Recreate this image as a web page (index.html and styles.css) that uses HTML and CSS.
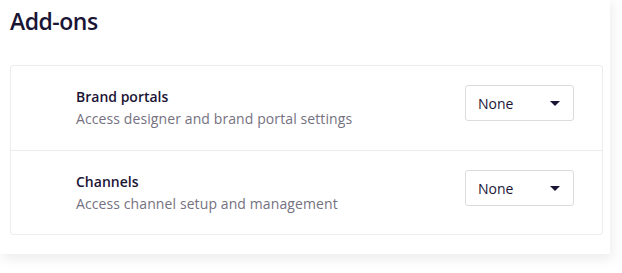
FILE: index.html
```html
<!DOCTYPE html>
<html>
<head>
<meta charset="utf-8">
<link rel="stylesheet" href="styles.css">
</head>
<body>
<div class="panel">
  <h1 class="title">Add-ons</h1>
  <div class="card">
    <div class="row">
      <div class="info">
        <div class="name">Brand portals</div>
        <div class="desc">Access designer and brand portal settings</div>
      </div>
      <div class="select"><span>None</span><span class="caret"></span></div>
    </div>
    <div class="row">
      <div class="info">
        <div class="name">Channels</div>
        <div class="desc">Access channel setup and management</div>
      </div>
      <div class="select"><span>None</span><span class="caret"></span></div>
    </div>
  </div>
</div>
</body>
</html>
```
FILE: styles.css
```css
html, body {
  margin: 0;
  padding: 0;
  background: #ffffff;
}
body {
  font-family: "Open Sans", "Noto Sans", sans-serif;
  width: 622px;
  height: 273px;
  overflow: hidden;
}
.panel {
  width: 610px;
  height: 258px;
  background: #fff;
  box-shadow: 2px 5px 12px rgba(0, 0, 0, 0.08);
  padding: 0 8px 0 10px;
  box-sizing: border-box;
  margin-top: -4px;
  padding-top: 4px;
}
.title {
  margin: 0;
  font-size: 23px;
  font-weight: 600;
  color: #1b1535;
  line-height: 32px;
  padding-top: 5px;
  height: 65px;
  box-sizing: border-box;
  letter-spacing: -0.5px;
}
.card {
  border: 1px solid #ececef;
  border-radius: 3px;
  width: 593px;
  box-sizing: border-box;
}
.row {
  display: flex;
  align-items: flex-start;
  justify-content: space-between;
  height: 84px;
  box-sizing: border-box;
  padding: 19px 28px 0 65px;
}
.row + .row {
  border-top: 1px solid #ececef;
  height: 84px;
}
.info {
  margin-top: 1px;
}
.name {
  font-size: 14px;
  font-weight: 600;
  color: #1b1535;
  line-height: 22px;
}
.desc {
  font-size: 14px;
  color: #75717f;
  line-height: 22px;
  letter-spacing: 0.1px;
}
.select {
  width: 109px;
  height: 36px;
  border: 1px solid #dcdbe0;
  border-radius: 3px;
  box-sizing: border-box;
  display: flex;
  align-items: center;
  justify-content: space-between;
  padding: 0 13px 0 12px;
  font-size: 14px;
  color: #1b1535;
}
.caret {
  width: 0;
  height: 0;
  border-left: 5px solid transparent;
  border-right: 5px solid transparent;
  border-top: 5px solid #1b1535;
}
```
